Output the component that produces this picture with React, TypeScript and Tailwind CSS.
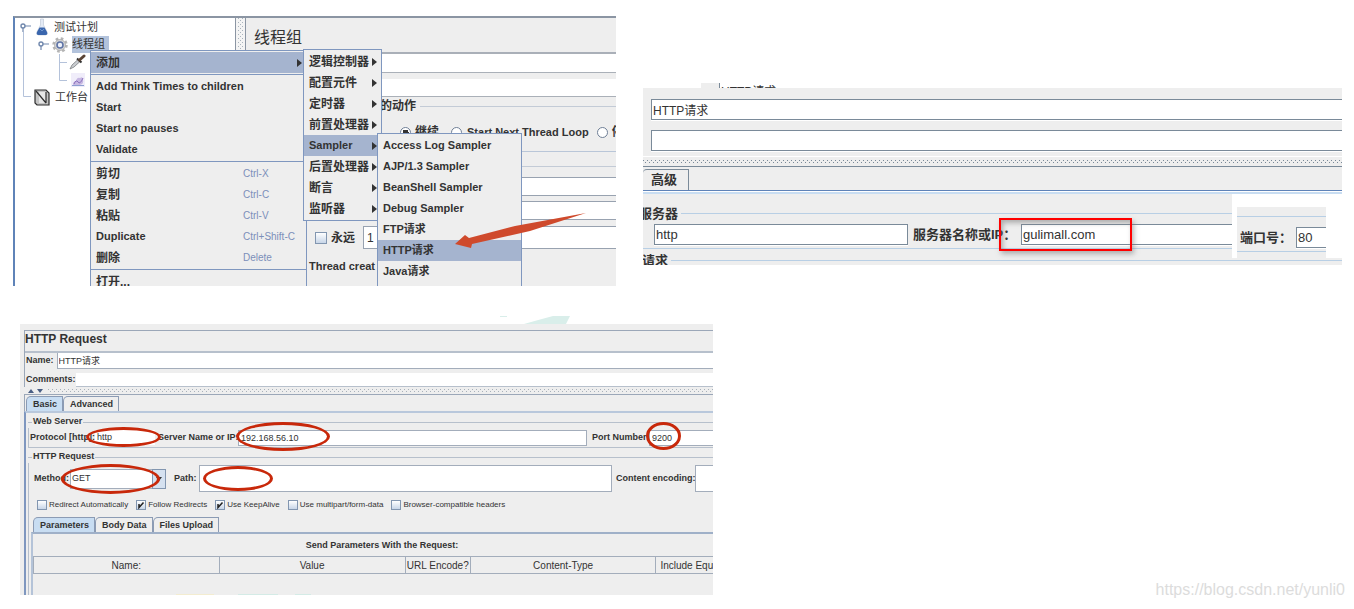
import { ReactNode } from "react";
import clsx from "clsx";

interface MenuEntry {
  label: string;
  shortcut?: string;
  submenu?: boolean;
  active?: boolean;
  separator?: boolean;
}

const threadGroupMenu: MenuEntry[] = [
  { label: "添加", submenu: true, active: true, separator: true },
  { label: "Add Think Times to children" },
  { label: "Start" },
  { label: "Start no pauses" },
  { label: "Validate", separator: true },
  { label: "剪切", shortcut: "Ctrl-X" },
  { label: "复制", shortcut: "Ctrl-C" },
  { label: "粘贴", shortcut: "Ctrl-V" },
  { label: "Duplicate", shortcut: "Ctrl+Shift-C" },
  { label: "删除", shortcut: "Delete", separator: true },
  { label: "打开..." },
];

const addMenu: MenuEntry[] = [
  { label: "逻辑控制器", submenu: true },
  { label: "配置元件", submenu: true },
  { label: "定时器", submenu: true },
  { label: "前置处理器", submenu: true },
  { label: "Sampler", submenu: true, active: true },
  { label: "后置处理器", submenu: true },
  { label: "断言", submenu: true },
  { label: "监听器", submenu: true },
];

const samplerMenu: MenuEntry[] = [
  { label: "Access Log Sampler" },
  { label: "AJP/1.3 Sampler" },
  { label: "BeanShell Sampler" },
  { label: "Debug Sampler" },
  { label: "FTP请求" },
  { label: "HTTP请求", active: true },
  { label: "Java请求" },
];

const requestOptions = [
  { label: "Redirect Automatically", checked: false },
  { label: "Follow Redirects", checked: true },
  { label: "Use KeepAlive", checked: true },
  { label: "Use multipart/form-data", checked: false },
  { label: "Browser-compatible headers", checked: false },
];

// staggered one pixel bumps of a split pane divider
const dots =
  "bg-[conic-gradient(from_270deg_at_1px_1px,#7a8a99_90deg,transparent_0),conic-gradient(from_270deg_at_1px_1px,#7a8a99_90deg,transparent_0)] bg-[length:4px_4px] bg-[position:0_0,2px_2px]";

function Menu({ items, className }: { items: MenuEntry[]; className: string }) {
  return (
    <div
      role="menu"
      className={clsx(
        "absolute border border-[#7f97bf] bg-[#eeeeee] pt-px font-bold text-[#333]",
        className
      )}
    >
      {items.map((item) => (
        <div key={item.label}>
          <button
            type="button"
            role="menuitem"
            className={clsx(
              "flex h-[21px] w-full items-center whitespace-nowrap pl-[5px] pr-1 text-left",
              /[A-Za-z]/.test(item.label) ? "text-[11px]" : "text-[12px]",
              item.active && "bg-[#a5b4cf]"
            )}
          >
            <span className="flex-1">{item.label}</span>
            {item.shortcut && (
              <span className="w-[59px] text-[10px] font-normal text-[#7c8fba]">
                {item.shortcut}
              </span>
            )}
            {item.submenu && (
              <svg viewBox="0 0 5 8" className="h-2 w-[5px] fill-[#333]">
                <path d="M0 0L5 4L0 8Z" />
              </svg>
            )}
          </button>
          {item.separator && (
            <div className="flex h-[3px] items-center">
              <div className="h-px w-full bg-[#7f97bf]" />
            </div>
          )}
        </div>
      ))}
    </div>
  );
}

function TreeHandle() {
  return (
    <svg viewBox="0 0 12 12" className="h-3 w-3" fill="none" stroke="#7188ad">
      <circle cx="4" cy="5" r="2" strokeWidth="1.4" />
      <path d="M6 5H12M4 7V11" strokeWidth="1.2" />
    </svg>
  );
}

function FlaskIcon() {
  return (
    <svg viewBox="0 0 14 18" className="h-[18px] w-[14px]">
      <path d="M5.5 1H8.5V7L12 14Q13 17 10.5 17H3.5Q1 17 2 14L5.5 7Z" fill="#e3eaf5" stroke="#b8c2d2" strokeWidth="0.6" />
      <path d="M4.5 9.5H9.5L12 14Q13 17 10.5 17H3.5Q1 17 2 14Z" fill="#3a66ad" />
      <path d="M5 11L7 13L9 11" stroke="#7fa3d8" strokeWidth="0.8" fill="none" />
    </svg>
  );
}

function GearIcon() {
  return (
    <svg viewBox="0 0 18 16" className="h-4 w-[18px]">
      <circle cx="9" cy="8" r="6.5" fill="none" stroke="#b5b5b5" strokeWidth="2.5" strokeDasharray="2.6 2.5" />
      <circle cx="9" cy="8" r="5.5" fill="#d6d6d6" stroke="#a3a3a3" strokeWidth="0.7" />
      <circle cx="9" cy="8" r="3" fill="#eef2fa" stroke="#5f74a6" strokeWidth="1.6" />
    </svg>
  );
}

function PipetteIcon() {
  return (
    <svg viewBox="0 0 18 16" className="h-4 w-[18px]">
      <path d="M1 15L3 11L9 5.5L11 7.5L5 13Z" fill="#c9ccd0" stroke="#7a7d82" strokeWidth="0.8" />
      <path d="M8 4.5L12.5 8.5" stroke="#333" strokeWidth="2" />
      <path d="M10.5 6L15 2" stroke="#5a4436" strokeWidth="3" strokeLinecap="round" />
    </svg>
  );
}

function ChartIcon() {
  return (
    <svg viewBox="0 0 14 14" className="h-[14px] w-[14px]">
      <rect width="14" height="14" fill="#f0edfa" />
      <path d="M2 12Q2 8 5 8Q6 4 9 5Q12 3 12 7Q13 11 9 12Z" fill="#c7b8e2" />
      <path d="M3 11Q5 6 7 9T12 5" stroke="#8a70bd" strokeWidth="1" fill="none" />
      <path d="M1 12.5H13" stroke="#8d9fd1" />
    </svg>
  );
}

function WorkbenchIcon() {
  return (
    <svg viewBox="0 0 16 17" className="h-[17px] w-4">
      <path d="M1 1H12L15 4V16H3L1 14Z" fill="#c4c4c4" stroke="#2e2e2e" strokeWidth="1.2" />
      <path d="M5 3H12V14H5Z" fill="#e6e6e6" />
      <path d="M2 2L12 14M12 3V14" stroke="#303030" strokeWidth="1.2" />
    </svg>
  );
}

function TestTree() {
  return (
    <div className="relative w-[221px] shrink-0 border-r border-[#8b95a3] bg-white text-[11px] text-[#333]">
      <svg className="absolute left-0 top-0 h-24 w-20" fill="none" stroke="#b4c2da">
        <path d="M8.5 14V78.5H16M44.5 36V62.5H52M44.5 44.5H52" />
      </svg>
      <div className="flex h-[18px] items-center pl-1">
        <TreeHandle />
        <span className="ml-1"><FlaskIcon /></span>
        <span className="ml-[5px]">测试计划</span>
      </div>
      <div className="flex h-[17px] items-center pl-[22px]">
        <TreeHandle />
        <span className="ml-[2px]"><GearIcon /></span>
        <span className="ml-[3px] bg-[#b3c3dc] pr-1">线程组</span>
      </div>
      <div className="flex h-[18px] items-center pl-[54px]">
        <PipetteIcon />
      </div>
      <div className="flex h-[17px] items-center pl-[56px]">
        <ChartIcon />
      </div>
      <div className="flex h-[18px] items-center gap-[5px] pl-[19px]">
        <WorkbenchIcon />
        <span>工作台</span>
      </div>
    </div>
  );
}

const swingRadio =
  "h-[11px] w-[11px] shrink-0 appearance-none rounded-full border border-[#6f7f96] bg-white checked:bg-[radial-gradient(circle,#333_3px,white_3px)]";
const swingCheck =
  "shrink-0 appearance-none border border-[#8296b0] bg-linear-to-b from-white to-[#c8d6e8]";

function ThreadGroupForm() {
  return (
    <div className="min-w-0 flex-1 overflow-hidden whitespace-nowrap border-l border-[#8b95a3] bg-[#eeeeee] text-[12px] font-bold text-[#333]">
      <h1 className="flex h-[35px] items-center border-b border-[#a9afb8] pl-2 pt-[6px] text-[16px] font-normal">
        线程组
      </h1>
      <input
        aria-label="名称"
        className="block h-5 w-full border-b border-t border-[#aab0b8] bg-white"
      />
      <input
        aria-label="注释"
        className="mt-[6px] block h-[18px] w-full border-b border-[#aab0b8] bg-white"
      />
      <fieldset className="h-[55px] border-b border-[#b9c6d8]">
        <legend className="flex h-[18px] w-full items-center gap-1 pl-[134px]">
          的动作
          <span className="h-px flex-1 bg-[#c3cbd6]" />
        </legend>
        <div className="flex h-[34px] items-center pl-[154px]">
          <label className="flex items-center gap-1">
            <input type="radio" name="on-error" defaultChecked className={swingRadio} />
            继续
          </label>
          <label className="ml-3 flex items-center gap-[5px] text-[11px]">
            <input type="radio" name="on-error" className={swingRadio} />
            Start Next Thread Loop
          </label>
          <label className="ml-2 flex items-center gap-1">
            <input type="radio" name="on-error" className={swingRadio} />
            停
          </label>
        </div>
      </fieldset>
      <div className="pb-2">
        <div className="flex h-[25px] items-center pt-1">
          <span className="h-px flex-1 bg-[#c3cbd6]" />
        </div>
        <div className="flex flex-col gap-[5px] pl-[120px]">
          <input aria-label="线程数" className="h-[19px] border-y border-[#98a2b0] bg-white" />
          <input aria-label="Ramp-Up" className="h-[19px] border-y border-[#98a2b0] bg-white" />
        </div>
        <div className="mt-[6px] flex h-[23px] items-center pl-[69px]">
          <label className="flex items-center gap-1">
            <input type="checkbox" className={clsx(swingCheck, "h-3 w-3")} />
            永远
          </label>
          <input
            aria-label="循环次数"
            defaultValue="1"
            className="ml-2 h-full min-w-0 flex-1 border border-r-0 border-[#98a2b0] bg-white pl-[3px] font-normal"
          />
        </div>
        <div className="mt-[6px] flex h-[23px] items-center pl-[63px] text-[11px]">
          Thread creat
        </div>
      </div>
    </div>
  );
}

function ThreadGroupWindow() {
  return (
    <section className="relative flex min-w-0 flex-[601] overflow-hidden border-l-2 border-t-2 border-l-[#5f83b8] border-t-[#8b95a3]">
      <TestTree />
      <div className="w-[9px] shrink-0 bg-[#f4f4f4] px-[2px]">
        <div className={clsx("h-full opacity-60", dots)} />
      </div>
      <ThreadGroupForm />
      <Menu items={threadGroupMenu} className="-bottom-2 left-[75px] top-8 w-[217px]" />
      <Menu items={addMenu} className="left-[288px] top-[31px] h-[172px] w-[79px]" />
      <Menu items={samplerMenu} className="-bottom-px left-[362px] top-[115px] w-[145px]" />
      <svg viewBox="0 0 132 36" className="absolute left-[440px] top-[194px] h-9 w-[132px]">
        <path d="M0 32L10 23L14 26L60 14L131 1L75 19L17 32L16 36Z" fill="#cf4a2c" />
      </svg>
    </section>
  );
}

const swingInput = "border border-[#7a8a99] bg-white shadow-[0_1px_0_#fff]";

function ServerWindow() {
  return (
    <section className="mt-[67px] min-w-0 flex-[699] overflow-hidden whitespace-nowrap text-[13px] text-[#333]">
      <div className="flex h-[5px] overflow-hidden pl-[58px] text-[12px] leading-[18px]">
        <div className="h-[5px] w-[18px] bg-[#eeeeee]" />
        <div className="border-l border-[#7a8a99] pl-px">HTTP请求</div>
      </div>
      <div className="bg-[#eeeeee]">
        <div className="flex flex-col gap-[10px] pb-[5px] pl-2 pt-[11px]">
          <input
            aria-label="名称"
            defaultValue="HTTP请求"
            className={clsx(swingInput, "h-[21px] border-r-0 pl-px text-[12px]")}
          />
          <input aria-label="注释" className={clsx(swingInput, "h-[21px] border-r-0")} />
        </div>
        <div className="border-b border-t border-b-[#7a8a99] border-t-white py-[3px]">
          <div className={clsx("h-[3px]", dots)} />
        </div>
        <div className="flex border-b border-[#5f83b8] pt-[2px]">
          <button
            type="button"
            className="h-[21px] rounded-tl-[4px] border-r border-t border-[#7a8a99] pl-2 pr-[11px] font-bold leading-5"
          >
            高级
          </button>
        </div>
        <div className="h-[3px] border-t border-white bg-[#c8ddf2]" />
      </div>

      <div className="flex bg-white">
        <fieldset className="min-w-0 flex-1 bg-[#eeeeee] pt-[13px]">
          <div className="flex h-[13px] items-center gap-[3px] font-bold">
            <span className="-ml-1 leading-[13px]">服务器</span>
            <span className="h-px flex-1 bg-[#b8cfe5]" />
          </div>
          <div className="mt-1 flex h-[25px] border-b border-[#b8cfe5] pl-[11px]">
            <input
              aria-label="协议"
              defaultValue="http"
              className={clsx(swingInput, "h-[21px] w-[254px] min-w-0 pl-px")}
            />
            <label htmlFor="server-host" className="ml-[5px] w-[108px] font-bold leading-[21px]">
              服务器名称或IP：
            </label>
            <div className="relative min-w-0 flex-1">
              <input
                id="server-host"
                defaultValue="gulimall.com"
                className={clsx(swingInput, "h-[21px] w-full border-r-0 pl-px")}
              />
              <span className="pointer-events-none absolute -left-[22px] -top-[6px] h-[33px] w-[133px] border-2 border-[#f00] shadow-[2px_3px_5px_#7778,inset_2px_3px_5px_#7778]" />
            </div>
          </div>
          <div className="h-[9px]" />
        </fieldset>
        <div className="ml-[5px] mr-4 mt-[13px] w-[89px] bg-[#eeeeee] pt-[9px]">
          <div className="border-y border-[#b8cfe5] pt-[10px]">
            <label className="flex h-6 gap-1 pl-[3px] font-bold leading-[21px]">
              端口号：
              <input
                defaultValue="80"
                className={clsx(swingInput, "h-[21px] min-w-0 flex-1 border-r-0 pl-px font-normal")}
              />
            </label>
          </div>
        </div>
      </div>

      <div className="bg-[#eeeeee] pb-[2px]">
        <div className="flex h-[5px] items-center gap-[3px] font-bold">
          <span className="-ml-px leading-[13px]">请求</span>
          <span className="h-px flex-1 bg-[#b8cfe5]" />
        </div>
      </div>
    </section>
  );
}

function Circled({ className, children, mark }: { className?: string; children: ReactNode; mark: string }) {
  return (
    <div className={clsx("relative flex", className)}>
      {children}
      <span className={clsx("pointer-events-none absolute rounded-[50%] border-[3px] border-[#c8280a]", mark)} />
    </div>
  );
}

function Tab({ active, children }: { active?: boolean; children: ReactNode }) {
  return (
    <button
      type="button"
      className={clsx(
        "h-[15px] rounded-tl-[5px] border border-b-0 border-[#8b9bb4] pl-[6px] pr-[5px] leading-[13px]",
        active ? "bg-[#c8ddf2]" : "bg-[#eeeeee]"
      )}
    >
      {children}
    </button>
  );
}

const smallInput = "min-w-0 border border-[#a3adbb] bg-white pl-[2px] font-normal";
const headerCell = "overflow-hidden border border-[#a3adbb] font-normal";

function HttpRequestWindow() {
  return (
    <section className="min-w-0 flex-[693] overflow-hidden whitespace-nowrap text-[9px] font-bold text-[#333]">
      <svg viewBox="0 0 693 8" preserveAspectRatio="xMinYMin" className="h-2 w-full">
        <path d="M504 8Q518 4 533 0H550L546 8Z" fill="#d9eeea" />
        <path d="M480 0H487V1H480Z" fill="#d9eeea" />
      </svg>
      <div className="bg-[#eeeeee] pl-1 pt-[6px]">
        <div className="border-l border-t border-[#9ba7b8]">
          <h2 className="h-[20px] text-[12px] leading-[17px]">HTTP Request</h2>
          <label className="flex h-[18px] items-center gap-[3px] border-t-2 border-[#b7c0cc] pl-px">
            Name:
            <input
              defaultValue="HTTP请求"
              className="h-[16px] min-w-0 flex-1 border-b border-l border-[#a3adbb] bg-white pl-px font-normal"
            />
          </label>
          <label className="mt-1 flex h-[14px] items-center pl-px">
            Comments:
            <input className="h-full min-w-0 flex-1 border-b border-[#b7c0cc] bg-white" />
          </label>
        </div>
        <div className="flex h-[8px] items-center gap-1 border-b border-[#9ba7b8] pl-1">
          <svg viewBox="0 0 16 4" className="h-1 w-4 fill-[#4a5f85]">
            <path d="M0 4L3 0L6 4ZM9 0H15L12 4Z" />
          </svg>
          <div className={clsx("h-[3px] flex-1 opacity-60", dots)} />
        </div>
        <div className="flex border-l border-[#9ba7b8] pl-px pt-px">
          <Tab active>Basic</Tab>
          <Tab>Advanced</Tab>
        </div>

        <div className="border-l-2 border-t-2 border-l-[#7f97bf] border-t-[#b9c8dc] pl-[2px] pt-[3px]">
          <fieldset>
            <legend className="flex h-[12px] w-full items-center">
              <span className="h-px w-1 bg-[#b7c0cc]" />
              <span className="px-px">Web Server</span>
              <span className="h-px flex-1 bg-[#b7c0cc]" />
            </legend>
            <div className="flex h-5 items-start border-b border-l border-[#b7c0cc] pl-px pt-[2px] leading-[15px]">
              <label htmlFor="protocol" className="w-[65px]">Protocol [http]:</label>
              <Circled className="w-[60px]" mark="-left-[9px] -top-[3px] h-5 w-[75px]">
                <input id="protocol" defaultValue="http" className="w-full min-w-0 bg-white pl-[2px] font-normal" />
              </Circled>
              <label htmlFor="server" className="ml-[3px] w-[80px]">Server Name or IP:</label>
              <Circled className="min-w-0 flex-1" mark="-left-[2px] -top-[8px] h-[29px] w-[94px]">
                <input id="server" defaultValue="192.168.56.10" className={clsx(smallInput, "h-4 w-full")} />
              </Circled>
              <label htmlFor="port" className="ml-[5px] w-[57px]">Port Number:</label>
              <Circled className="w-[64px]" mark="-left-[3px] -top-[8px] h-[28px] w-[35px]">
                <input id="port" defaultValue="9200" className={clsx(smallInput, "h-4 w-full border-r-0")} />
              </Circled>
            </div>
          </fieldset>

          <fieldset className="mt-[3px]">
            <legend className="flex h-[12px] w-full items-center">
              <span className="h-px w-1 bg-[#b7c0cc]" />
              <span className="px-px">HTTP Request</span>
              <span className="h-px flex-1 bg-[#b7c0cc]" />
            </legend>
            <div className="border-l border-[#b7c0cc] pl-[2px]">
              <div className="flex h-[29px] items-center pl-[3px] pt-[2px]">
                <label htmlFor="method" className="w-[36px]">Method:</label>
                <Circled className="w-[96px]" mark="-left-[9px] -top-[5px] h-[30px] w-[99px]">
                  <select
                    id="method"
                    className="h-5 w-full appearance-none border border-[#a3adbb] bg-white pl-px font-normal"
                  >
                    <option>GET</option>
                  </select>
                  <span className="pointer-events-none absolute right-0 top-0 flex h-5 w-[14px] items-center justify-center border border-[#8296b0] bg-[#d5e1f0]">
                    <svg viewBox="0 0 6 4" className="h-1 w-[6px] fill-[#333]">
                      <path d="M0 0H6L3 4Z" />
                    </svg>
                  </span>
                </Circled>
                <label htmlFor="path" className="ml-2 w-[25px]">Path:</label>
                <Circled className="min-w-0 flex-1" mark="left-1 top-px h-[25px] w-[70px]">
                  <input id="path" className={clsx(smallInput, "h-[27px] w-full")} />
                </Circled>
                <label htmlFor="encoding" className="ml-1 w-[79px]">Content encoding:</label>
                <input id="encoding" className={clsx(smallInput, "h-[27px] w-[18px] border-r-0")} />
              </div>

              <div className="flex h-[25px] items-center gap-2 pl-[6px] text-[8px] font-normal">
                {requestOptions.map((option) => (
                  <label key={option.label} className="flex items-center gap-[2px]">
                    <span className="relative flex">
                      <input
                        type="checkbox"
                        defaultChecked={option.checked}
                        className={clsx(swingCheck, "h-[10px] w-[10px]")}
                      />
                      {option.checked && (
                        <svg viewBox="0 0 10 10" className="pointer-events-none absolute left-0 top-0 h-[10px] w-[10px]" fill="none" stroke="#222" strokeWidth="1.5">
                          <path d="M3 4V7.5L7.5 2.5" />
                        </svg>
                      )}
                    </span>
                    {option.label}
                  </label>
                ))}
              </div>

              <div className="flex pl-[2px]">
                <Tab active>Parameters</Tab>
                <Tab>Body Data</Tab>
                <Tab>Files Upload</Tab>
              </div>
              <div className="border-l-2 border-t-2 border-l-[#b4c3d8] border-t-[#9fb0c8]">
                <table className="w-full table-fixed border-collapse text-center">
                  <caption className="h-[22px] pl-[18px] leading-[22px]">Send Parameters With the Request:</caption>
                  <thead>
                    <tr className="h-[17px] text-[10px]">
                      <th className={clsx(headerCell, "w-[27.3%]")}>Name:</th>
                      <th className={clsx(headerCell, "w-[27.4%]")}>Value</th>
                      <th className={clsx(headerCell, "w-[9.6%]")}>URL Encode?</th>
                      <th className={clsx(headerCell, "w-[27.3%]")}>Content-Type</th>
                      <th className={clsx(headerCell, "border-r-0 pl-1 text-left")}>Include Equa</th>
                    </tr>
                  </thead>
                </table>
                <div className="flex h-[21px] items-end pl-[143px]">
                  <span className="h-px w-[38px] bg-[#f3ecd0]" />
                  <span className="ml-6 h-px w-10 bg-[#d4ebe6]" />
                  <span className="ml-[17px] h-px w-4 bg-[#d4ebe6]" />
                </div>
              </div>
            </div>
          </fieldset>
        </div>
      </div>
    </section>
  );
}

export default function App() {
  return (
    <main className="flex min-h-screen flex-col overflow-hidden bg-white pt-4 font-['Liberation_Sans','Noto_Sans_CJK_SC',sans-serif]">
      <div className="flex items-start gap-[27px] pl-[13px] pr-3">
        <ThreadGroupWindow />
        <ServerWindow />
      </div>
      <div className="mt-[30px] flex items-start pl-5 pr-[9px]">
        <HttpRequestWindow />
        <footer className="flex-[632] self-end text-right text-[16px] leading-[10px] text-[#dcdcdc]">
          https://blog.csdn.net/yunli0
        </footer>
      </div>
    </main>
  );
}
